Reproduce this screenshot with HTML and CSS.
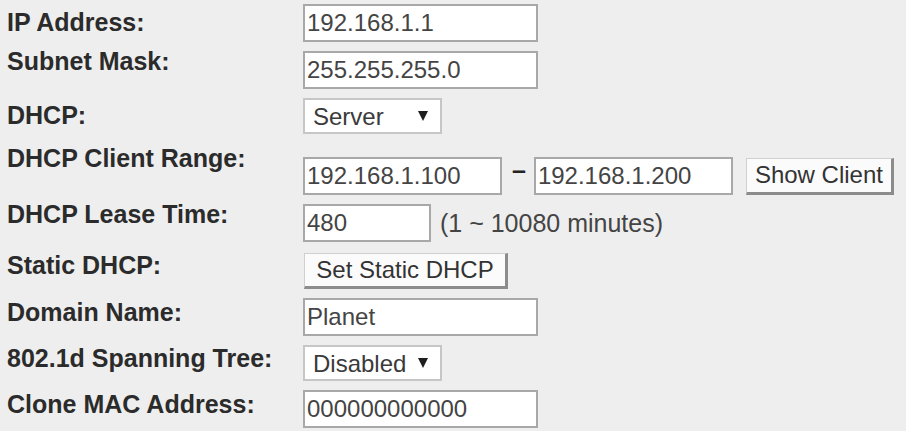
FILE: index.html
```html
<!DOCTYPE html>
<html lang="en">
<head>
    <meta charset="UTF-8">
    <meta name="viewport" content="width=device-width, initial-scale=1.0">
    <title>LAN Setup</title>
    <link rel="stylesheet" href="styles.css">
</head>
<body>
    <div class="lan-form">
        <div class="row">
            <label class="label up-sm" for="ipAddr">IP Address:</label>
            <div class="field"><input class="txt wide" type="text" id="ipAddr" value="192.168.1.1"></div>
        </div>
        <div class="row">
            <label class="label up-lg" for="subnet">Subnet Mask:</label>
            <div class="field"><input class="txt wide" type="text" id="subnet" value="255.255.255.0"></div>
        </div>
        <div class="row">
            <label class="label up-sm" for="dhcpMode">DHCP:</label>
            <div class="field">
                <span class="select-wrap">
                    <select class="sel" id="dhcpMode">
                        <option>Server</option>
                        <option>Disabled</option>
                    </select>
                </span>
            </div>
        </div>
        <div class="row range-row">
            <label class="label" for="rangeStart">DHCP Client Range:</label>
            <div class="field">
                <input class="txt range" type="text" id="rangeStart" value="192.168.1.100">
                <span class="dash">&ndash;</span>
                <input class="txt range" type="text" id="rangeEnd" value="192.168.1.200">
                <button class="btn btn-client" type="button">Show Client</button>
            </div>
        </div>
        <div class="row">
            <label class="label up-lg" for="lease">DHCP Lease Time:</label>
            <div class="field">
                <input class="txt short" type="text" id="lease" value="480">
                <span class="hint">(1 ~ 10080 minutes)</span>
            </div>
        </div>
        <div class="row">
            <label class="label">Static DHCP:</label>
            <div class="field"><button class="btn btn-static" type="button">Set Static DHCP</button></div>
        </div>
        <div class="row">
            <label class="label" for="domain">Domain Name:</label>
            <div class="field"><input class="txt wide" type="text" id="domain" value="Planet"></div>
        </div>
        <div class="row">
            <label class="label" for="stp">802.1d Spanning Tree:</label>
            <div class="field">
                <span class="select-wrap">
                    <select class="sel sel-stp" id="stp">
                        <option>Disabled</option>
                        <option>Enabled</option>
                    </select>
                </span>
            </div>
        </div>
        <div class="row">
            <label class="label" for="cloneMac">Clone MAC Address:</label>
            <div class="field"><input class="txt wide" type="text" id="cloneMac" value="000000000000"></div>
        </div>
    </div>
</body>
</html>
```

FILE: styles.css
```css
body { margin: 0; padding: 4px 0 0 7px; background-color: #eeeeee; font-family: "Liberation Sans", Arial, sans-serif; color: #2b2b2b; }
.lan-form { display: flex; flex-direction: column; gap: 9px; }
.row { display: grid; grid-template-columns: 296px auto; align-items: center; }
.label { font-size: 25px; font-weight: bold; line-height: 20px; margin-bottom: 10px; color: #2b2b2b; white-space: nowrap; }
.label.up-sm { margin-bottom: 2px; }
.label.up-lg { margin-bottom: 18px; }
.field { display: flex; align-items: center; }

.txt { box-sizing: border-box; height: 38px; padding: 0 0 0 2px; border: 2px solid #a8a8a8; background: #fff; font-family: "Liberation Sans", Arial, sans-serif; font-size: 24px; color: #444; outline: none; }
.txt.wide { width: 235px; }
.txt.range { width: 199px; }
.txt.short { width: 128px; }

.range-row { align-items: start; }
.range-row .label { margin: 5px 0 0; }
.range-row .field { margin-top: 14px; }
.dash { font-size: 25px; font-weight: bold; line-height: 20px; margin: 0 8px 13px 10px; color: #222; }

.hint { font-size: 25px; color: #444; margin-left: 9px; }

.btn { box-sizing: border-box; height: 37px; padding: 0; background: #fbfbfb; border: 1px solid #d0d0d0; border-right: 3px solid #8c8c8c; border-bottom: 3px solid #8c8c8c; font-family: "Liberation Sans", Arial, sans-serif; font-size: 24px; color: #333; cursor: pointer; }
.btn-client { width: 148px; margin-left: 13px; }
.btn-static { width: 204px; height: 36px; margin: 2px 0 0 1px; }

.select-wrap { position: relative; display: inline-block; }
.sel { box-sizing: border-box; width: 139px; height: 36px; padding: 0 0 0 8px; -webkit-appearance: none; appearance: none; background: #fff; border: 2px solid #c6c6c6; border-radius: 0; font-family: "Liberation Sans", Arial, sans-serif; font-size: 24px; color: #3a3a3a; outline: none; }
.select-wrap::after { content: ""; position: absolute; right: 14px; top: 13px; border-left: 5px solid transparent; border-right: 5px solid transparent; border-top: 10px solid #1e1e1e; pointer-events: none; }
```
